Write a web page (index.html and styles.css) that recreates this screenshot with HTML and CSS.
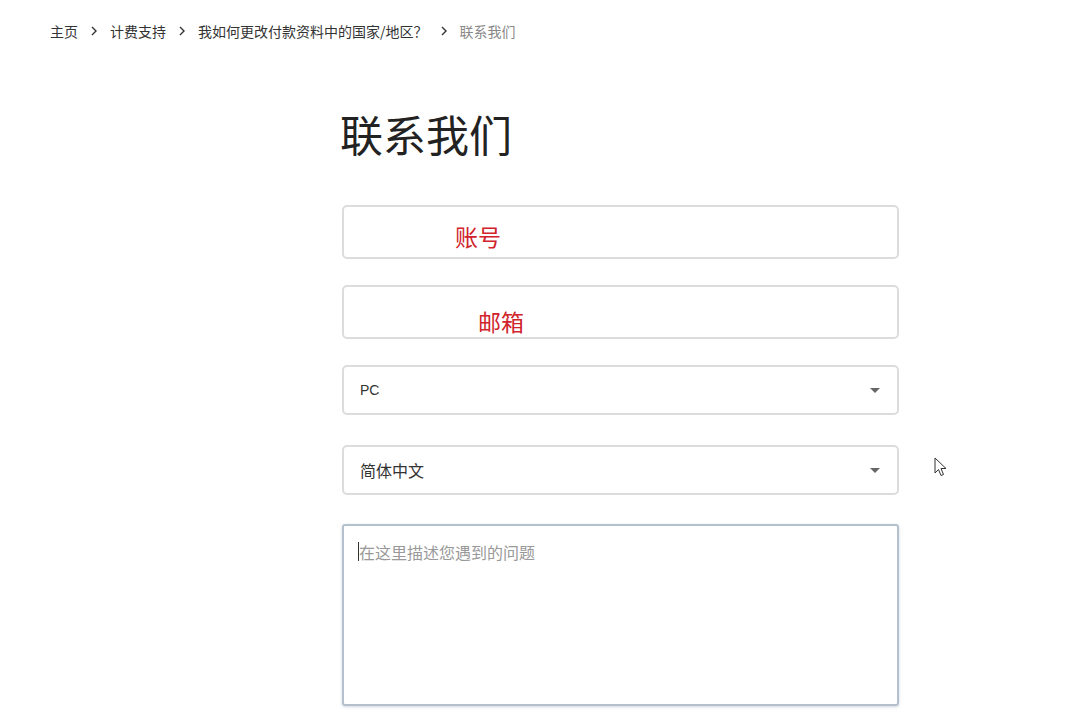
FILE: index.html
```html
<!DOCTYPE html>
<html lang="zh-CN">
<head>
<meta charset="utf-8">
<title>联系我们</title>
<link rel="stylesheet" href="styles.css">
</head>
<body>
<nav class="crumbs">
  <span class="crumb">主页</span>
  <svg class="sep" width="8" height="12" viewBox="0 0 8 12"><path d="M2 2l4 4-4 4" fill="none" stroke="#333" stroke-width="1.4"/></svg>
  <span class="crumb">计费支持</span>
  <svg class="sep" width="8" height="12" viewBox="0 0 8 12"><path d="M2 2l4 4-4 4" fill="none" stroke="#333" stroke-width="1.4"/></svg>
  <span class="crumb">我如何更改付款资料中的国家/地区？</span>
  <svg class="sep" width="8" height="12" viewBox="0 0 8 12"><path d="M2 2l4 4-4 4" fill="none" stroke="#333" stroke-width="1.4"/></svg>
  <span class="crumb current">联系我们</span>
</nav>
<main class="form">
  <h1 class="title">联系我们</h1>
  <div class="field field-account"><span class="note">账号</span></div>
  <div class="field field-email"><span class="note">邮箱</span></div>
  <div class="select select-platform"><span class="value">PC</span><span class="arrow"></span></div>
  <div class="select select-lang"><span class="value">简体中文</span><span class="arrow"></span></div>
  <div class="textarea"><span class="caret"></span><span class="placeholder">在这里描述您遇到的问题</span></div>
</main>
<svg class="pointer" width="14" height="21" viewBox="0 0 14 21"><path d="M1 1v15l3.5-3.5 2.5 6 2.5-1-2.5-6h5z" fill="#fff" stroke="#333" stroke-width="1" stroke-linejoin="round"/></svg>
</body>
</html>
```
FILE: styles.css
```css
html, body {
  margin: 0;
  padding: 0;
  background: #fff;
}
body {
  font-family: "Noto Sans CJK SC", "Noto Sans", "Liberation Sans", sans-serif;
  color: #222;
  position: relative;
  min-height: 717px;
}
.crumbs {
  display: flex;
  align-items: center;
  padding: 21px 0 0 50px;
  height: 20px;
  font-size: 14px;
  line-height: 20px;
  color: #333;
}
.crumbs .sep {
  margin: 0 12px 0 12px;
}
.crumb.current {
  color: #888;
}
.form {
  width: 557px;
  margin: 0 0 0 342px;
  padding-top: 66px;
}
.title {
  margin: 0;
  font-size: 43px;
  font-weight: 400;
  line-height: 52px;
  color: #222;
  height: 52px;
  margin-left: -2px;
}
.field {
  box-sizing: border-box;
  height: 54px;
  border: 2px solid #dcdcdc;
  border-radius: 5px;
  font-size: 23px;
  line-height: 24px;
  color: #d0232b;
}
.field-account {
  margin-top: 46px;
  padding: 17px 0 0 111px;
}
.field-email {
  margin-top: 26px;
  padding: 22px 0 0 134px;
}
.select {
  box-sizing: border-box;
  height: 50px;
  border: 2px solid #dcdcdc;
  border-radius: 5px;
  display: flex;
  align-items: center;
  justify-content: space-between;
  padding: 0 17px 0 16px;
  font-size: 15px;
  color: #333;
}
.select-platform {
  margin-top: 26px;
}
.select-platform .value {
  font-family: "Liberation Sans", "Noto Sans CJK SC", sans-serif;
  font-size: 14px;
}
.select-lang {
  margin-top: 30px;
  font-size: 16px;
}
.arrow {
  width: 0;
  height: 0;
  border-left: 5px solid transparent;
  border-right: 5px solid transparent;
  border-top: 5px solid #666;
}
.textarea {
  box-sizing: border-box;
  height: 182px;
  margin-top: 29px;
  border: 2px solid #b4c0ce;
  border-radius: 3px;
  box-shadow: 0 1px 3px rgba(120, 140, 160, 0.35);
  padding: 16px 0 0 14px;
  display: flex;
  align-items: flex-start;
  font-size: 16px;
  line-height: 20px;
  color: #999;
}
.caret {
  width: 1px;
  height: 19px;
  background: #333;
}
.pointer {
  position: absolute;
  left: 934px;
  top: 457px;
}
```
